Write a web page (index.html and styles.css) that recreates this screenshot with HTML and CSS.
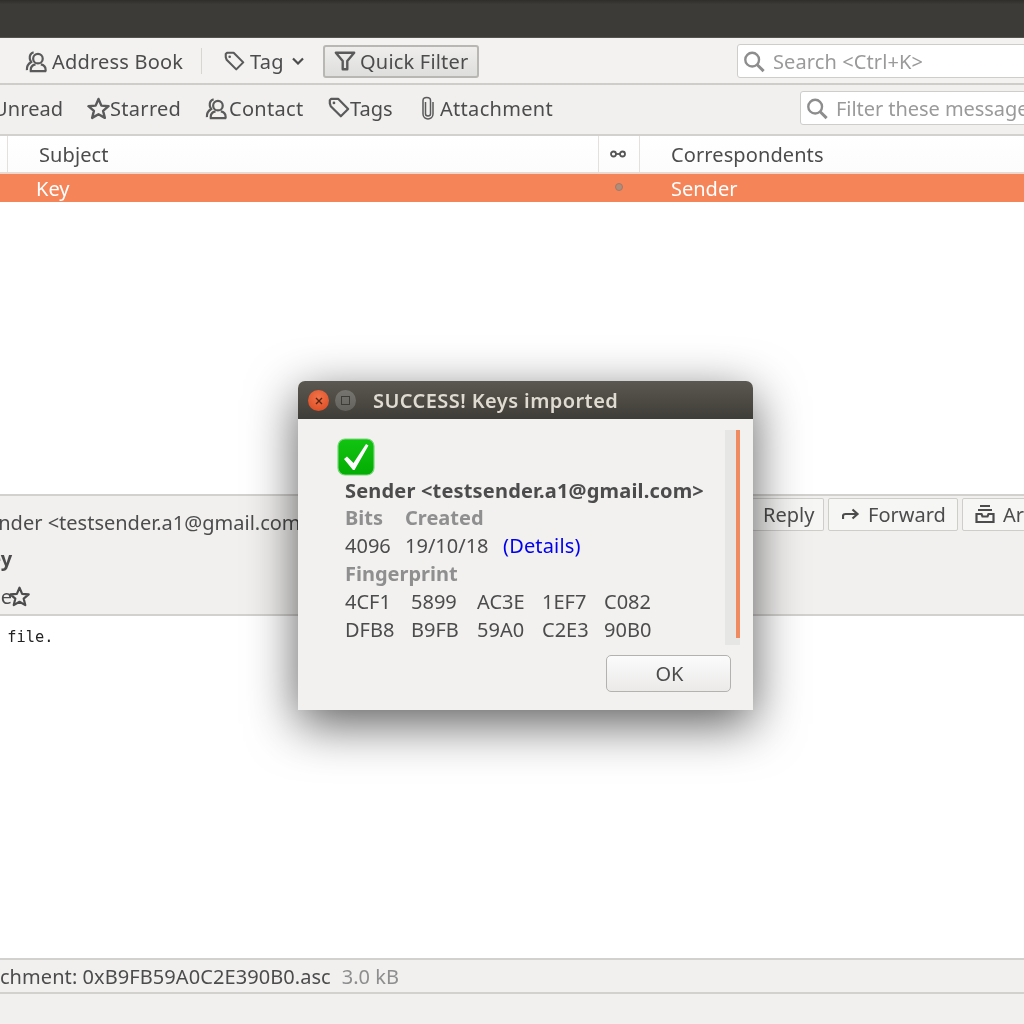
FILE: index.html
```html
<!DOCTYPE html>
<html lang="en">
<head>
<meta charset="utf-8">
<title>Keys imported</title>
<link rel="stylesheet" href="styles.css">
</head>
<body>
<svg class="defs" width="0" height="0" aria-hidden="true">
  <symbol id="i-person" viewBox="0 0 24 24"><g fill="none" stroke="currentColor" stroke-width="2.300"><circle cx="13.500" cy="9" r="5"/><path d="M6 22.500v-2c0-3.500 2.500-5 5-5.500M21.500 22.500v-2c0-3.500-2.500-5-5-5.500M5 22h17"/><path d="M9 2.500C6 3 4.500 6 5 9c.2 1.500 1 2.500 1.500 3.500C4 14 1.500 16.500 2 21"/></g></symbol>
  <symbol id="i-tag" viewBox="0 0 24 24"><path fill="none" stroke="currentColor" stroke-width="2.400" stroke-linejoin="round" d="M2 7V3.500L3.500 2H11l11 11-8 8L3 10z"/><circle cx="6.500" cy="6.500" r="1.500" fill="currentColor"/></symbol>
  <symbol id="i-star" viewBox="0 0 24 24"><path fill="none" stroke="currentColor" stroke-width="2.500" stroke-linejoin="round" d="M12 2l3 7 7.500.6-5.700 4.900 1.800 7.300L12 18l-6.600 3.800 1.800-7.300L1.500 9.600 9 9z"/></symbol>
  <symbol id="i-search" viewBox="0 0 24 24"><g fill="none" stroke="currentColor"><circle cx="10" cy="10" r="7.500" stroke-width="2.600"/><path d="M15.500 15.500l7 7" stroke-width="3.200"/></g></symbol>
</svg>

<div class="app">
  <div class="titlebar"></div>

  <div class="toolbar">
    <span class="sliver">:</span>
    <span class="tool tool-book"><svg class="ico"><use href="#i-person"/></svg>Address Book</span>
    <span class="sep"></span>
    <span class="tool tool-tag"><svg class="ico ico-tag"><use href="#i-tag"/></svg>Tag
      <svg class="chev" viewBox="0 0 12 8"><path d="M1 1.500l5 5 5-5" fill="none" stroke="currentColor" stroke-width="2.200"/></svg></span>
    <span class="qf"><svg class="ico ico-funnel" viewBox="0 0 24 24"><path d="M2 3h20l-7.500 9v9h-5v-9z" fill="none" stroke="currentColor" stroke-width="2.600" stroke-linejoin="round"/></svg>Quick Filter</span>
    <div class="search search-main"><svg class="ico-s"><use href="#i-search"/></svg><span>Search &lt;Ctrl+K&gt;</span></div>
  </div>

  <div class="filterbar">
    <span class="f f-unread">Unread</span>
    <span class="f f-star"><svg class="ico"><use href="#i-star"/></svg>Starred</span>
    <span class="f f-contact"><svg class="ico"><use href="#i-person"/></svg>Contact</span>
    <span class="f f-tags"><svg class="ico ico-small"><use href="#i-tag"/></svg>Tags</span>
    <span class="f f-att"><svg class="ico ico-clip" viewBox="0 0 14 24"><path d="M4.500 6v12c0 2.500 5 2.500 5 0V4.500C9.500 .5 2 .5 2 4.500V18c0 6.500 10 6.500 10 0V6" fill="none" stroke="currentColor" stroke-width="1.500"/></svg>Attachment</span>
    <div class="search search-filter"><svg class="ico-s"><use href="#i-search"/></svg><span>Filter these messages</span></div>
  </div>

  <div class="thead">
    <div class="th th-first"></div>
    <div class="th th-subject">Subject</div>
    <div class="th th-thread"><svg class="glasses" viewBox="0 0 16 8"><g fill="none" stroke="#555" stroke-width="1.800"><circle cx="3.500" cy="4" r="2.500"/><circle cx="12.500" cy="4" r="2.500"/><path d="M6 4h4"/></g></svg></div>
    <div class="th th-corr">Correspondents</div>
  </div>

  <div class="row">
    <div class="td-key">Key</div>
    <div class="td-dot"><span class="dot"></span></div>
    <div class="td-sender">Sender</div>
  </div>

  <div class="list"></div>

  <div class="msghead">
    <div class="mh-line mh-from">
      <span class="mh-from-text">Sender &lt;testsender.a1@gmail.com&gt;</span>
      <div class="actions">
        <span class="act act-reply">Reply</span>
        <span class="act act-forward"><svg class="ico-f" viewBox="0 0 18 12"><path d="M1 11V8c0-1.500 1-2 2.500-2H15M10.500 1.500L15.500 6l-5 4.500" fill="none" stroke="currentColor" stroke-width="2.200"/></svg>Forward</span>
        <span class="act act-archive"><svg class="ico-a" viewBox="0 0 20 20"><g fill="none" stroke="currentColor" stroke-width="2.200"><path d="M5 2h10M3 6h14"/><path d="M1.500 10h5l1 2.500h5l1-2.500h5v8h-17z"/></g></svg>Archive</span>
      </div>
    </div>
    <div class="mh-line mh-subj">Key</div>
    <div class="mh-line mh-me">me<svg class="ico ico-star2"><use href="#i-star"/></svg></div>
  </div>

  <div class="body"><pre class="bodytext">Public key file.</pre></div>

  <div class="attach"><span class="att-name">1 attachment: 0xB9FB59A0C2E390B0.asc</span><span class="att-size">3.0 kB</span></div>
  <div class="foot"></div>

  <div class="dialog">
    <div class="dlg-title">
      <span class="wbtn wbtn-close"><svg viewBox="0 0 10 10"><path d="M2 2l6 6M8 2l-6 6" stroke="#5a2410" stroke-width="1.400"/></svg></span>
      <span class="wbtn wbtn-max"><span class="sq"></span></span>
      <span class="dlg-name">SUCCESS! Keys imported</span>
    </div>
    <div class="dlg-main">
      <div class="dlg-scroll">
        <svg class="check" viewBox="0 0 38 38"><defs><linearGradient id="g-check" x1="0" y1="0" x2="0" y2="1"><stop offset="0" stop-color="#12c412"/><stop offset="1" stop-color="#04ac04"/></linearGradient></defs><rect x="1" y="1" width="36" height="36" rx="7" fill="url(#g-check)" stroke="#7ad87a" stroke-width="1.200"/><path d="M7 21l3-2.500 6.500 6.500L29 6l2.500 1.500L17.500 32H16z" fill="#fff"/></svg>
        <div class="d-name">Sender &lt;testsender.a1@gmail.com&gt;</div>
        <div class="d-info">
          <span class="lbl">Bits</span><span class="lbl">Created</span><span></span>
          <span>4096</span><span>19/10/18</span><a class="details">(Details)</a>
        </div>
        <div class="lbl d-fp">Fingerprint</div>
        <div class="d-grid">
          <span>4CF1</span><span>5899</span><span>AC3E</span><span>1EF7</span><span>C082</span>
          <span>DFB8</span><span>B9FB</span><span>59A0</span><span>C2E3</span><span>90B0</span>
        </div>
        <div class="sb"><div class="sb-thumb"></div></div>
      </div>
      <div class="dlg-foot"><span class="okbtn">OK</span></div>
    </div>
  </div>
</div>
</body>
</html>
```

FILE: styles.css
```css
* { box-sizing: border-box; }
html, body { margin: 0; padding: 0; }
body { width: 1024px; height: 1024px; overflow: hidden; background: #fff; }
.defs { position: absolute; }
.app {
  position: relative;
  width: 1024px;
  height: 1024px;
  overflow: hidden;
  display: flex;
  flex-direction: column;
  font-family: "Noto Sans", "Open Sans", sans-serif;
  font-size: 20px;
  color: #4c4c4c;
  filter: blur(0.45px);
}
.titlebar { height: 38px; flex: none; background: linear-gradient(#2f2e2b, #3c3b37 12%); border-bottom: 1px solid #55534e; }

.toolbar {
  height: 47px; flex: none;
  display: flex; align-items: center;
  background: #f3f2f1;
  border-bottom: 2px solid #cfcdca;
  white-space: nowrap;
  letter-spacing: .2px;
  padding-top: 1px;
}
.toolbar > *, .filterbar > * { flex: none; }
.sliver { color: #5b8fc9; width: 2px; overflow: hidden; margin-left: -3px; }
.ico { width: 23px; height: 23px; flex: none; color: #5a5a5a; }
.tool { display: inline-flex; align-items: center; }
.tool-book { margin-left: 26px; gap: 4px; width: 158px; }
.sep { width: 1px; height: 26px; background: #d8d6d3; margin-left: 18px; }
.tool-tag { margin-left: 22px; gap: 5px; width: 84px; }
.ico-tag { width: 21px; height: 21px; }
.chev { width: 12px; height: 8px; margin-left: 3px; color: #4c4c4c; flex: none; }
.qf {
  margin-left: 15px; width: 156px; height: 33px;
  display: inline-flex; align-items: center; gap: 4px; padding-left: 9px;
  border: 2px solid #b9b7b4; border-radius: 3px;
  background: linear-gradient(#efeeed, #dededc);
}
.ico-funnel { width: 22px; height: 22px; }

.search {
  height: 34px; width: 340px;
  display: flex; align-items: center; gap: 6px;
  background: #fff; border: 1px solid #cfcdca; border-radius: 3px;
  color: #9a9a9a; padding-left: 5px;
}
.ico-s { width: 22px; height: 23px; color: #8d8d8d; flex: none; }
.search-main { margin-left: 258px; gap: 8px; letter-spacing: .1px; }
.search-filter { margin-left: 247px; gap: 8px; letter-spacing: -.05px; }

.filterbar {
  height: 51px; flex: none;
  display: flex; align-items: center;
  background: #f1f0ef;
  border-bottom: 2px solid #d3d1ce;
  white-space: nowrap;
  letter-spacing: .3px;
  padding-bottom: 3px;
}
.f { display: inline-flex; align-items: center; }
.f-unread { margin-left: -7px; width: 65px; letter-spacing: .1px; }
.f-star { margin-left: 29px; gap: 0; width: 94px; }
.f-contact { margin-left: 24px; gap: 1px; width: 99px; }
.f-tags { margin-left: 24px; gap: 0; width: 66px; letter-spacing: 0; }
.ico-small { width: 22px; height: 22px; }
.f-att { margin-left: 27px; gap: 5px; width: 132px; }
.ico-clip { width: 14px; height: 24px; }

.thead {
  height: 38px; flex: none;
  display: grid; grid-template-columns: 8px 591px 41px 1fr;
  background: linear-gradient(#fff, #fcfcfc);
  border-bottom: 2px solid #e9d9d1;
  letter-spacing: .1px;
}
.th { display: flex; align-items: center; border-right: 1px solid #e3e1de; }
.th-subject { padding-left: 31px; }
.th-thread { justify-content: center; }
.th-corr { padding-left: 31px; border-right: 0; }
.glasses { width: 16px; height: 8px; margin-right: 2px; }

.row {
  height: 28px; flex: none;
  display: grid; grid-template-columns: 599px 40px 1fr;
  align-items: center;
  background: #f58459; color: #fff;
}
.td-key { padding-left: 36px; }
.td-dot { display: flex; justify-content: center; padding: 0 1px 3px 0; }
.dot { width: 8px; height: 8px; border-radius: 50%; background: #b08c7b; border: 1px solid #a07a68; }
.td-sender { padding-left: 32px; }

.list { height: 292px; flex: none; background: #fff; }

.msghead {
  height: 122px; flex: none;
  background: #f1f0ef;
  border-top: 2px solid #d3d1ce;
  border-bottom: 2px solid #d3d1ce;
  display: flex; flex-direction: column;
  white-space: nowrap;
}
.mh-line { height: 37px; flex: none; display: flex; align-items: center; }
.mh-from { height: 44px; }
.mh-from-text { margin: 8px 0 0 -24px; width: 776px; flex: none; }
.actions { display: flex; gap: 4px; flex: none; margin-bottom: 8px; }
.act {
  height: 33px; display: inline-flex; align-items: center;
  background: #f6f6f5; border: 1px solid #cfcdca; border-radius: 2px;
}
.act-reply { width: 72px; padding-left: 11px; border-left: 0; }
.act-forward { width: 130px; padding-left: 13px; gap: 8px; }
.act-archive { width: 120px; padding-left: 12px; gap: 8px; }
.ico-f { width: 18px; height: 12px; }
.ico-a { width: 20px; height: 20px; }
.mh-subj { font-weight: 700; margin-left: -24px; }
.mh-me { margin-left: -18px; padding-top: 1px; }
.ico-star2 { color: #4c4c4c; width: 21px; height: 21px; margin-left: -3px; }

.body { flex: 1; background: #fff; min-height: 0; }
.bodytext {
  margin: 12px 0 0 -94px;
  font-family: "DejaVu Sans Mono", monospace;
  font-size: 15.300px; color: #222;
}
.attach {
  height: 36px; flex: none;
  display: flex; align-items: center; white-space: nowrap;
  background: #f1f0ef;
  border-top: 2px solid #d3d1ce;
  border-bottom: 2px solid #d3d1ce;
}
.att-name { margin-left: -54px; letter-spacing: .07px; }
.att-size { color: #8e8e8e; margin-left: 11px; }
.foot { flex: none; height: 30px; background: #f1f0ef; }

.dialog {
  position: absolute; left: 298px; top: 381px;
  width: 455px; height: 329px;
  display: flex; flex-direction: column;
  border-radius: 7px 7px 0 0;
  background: #f2f1f0;
  box-shadow: 0 14px 50px rgba(0,0,0,.64);
  white-space: nowrap;
}
.dlg-title {
  height: 38px; flex: none;
  display: flex; align-items: center;
  background: linear-gradient(#5a5850, #3f3d37);
  border-radius: 7px 7px 0 0;
  padding: 1px 0 0 10px;
}
.wbtn { width: 21px; height: 21px; border-radius: 50%; display: flex; align-items: center; justify-content: center; flex: none; }
.wbtn-close { background: radial-gradient(circle at 50% 35%, #f2734a, #d9481f); }
.wbtn-close svg { width: 10px; height: 10px; }
.wbtn-max { margin-left: 6px; background: linear-gradient(#77756f, #64625c); }
.sq { width: 9px; height: 9px; border: 1.500px solid #3d3c37; }
.dlg-name { margin-left: 17px; color: #dfdbd2; font-weight: 600; letter-spacing: .42px; }

.dlg-main { flex: 1; display: flex; flex-direction: column; min-height: 0; }
.dlg-scroll {
  position: relative; height: 226px; flex: none;
  margin-top: 11px;
  padding-left: 47px;
  color: #4c4c4c;
}
.check { display: block; width: 38px; height: 38px; margin: 8px 0 0 -8px; }
.d-name { font-weight: 700; height: 28px; line-height: 30px; letter-spacing: .18px; }
.lbl { font-weight: 700; color: #8f8f8f; }
.d-info { display: grid; grid-template-columns: 60px 98px auto; justify-content: start; grid-auto-rows: 28px; line-height: 28px; }
.details { color: #0000ee; letter-spacing: .15px; }
.d-fp { height: 28px; line-height: 28px; }
.d-grid { display: grid; grid-template-columns: 66px 66px 65px 62px 60px; justify-content: start; grid-auto-rows: 28px; line-height: 28px; }
.sb { position: absolute; left: 427px; top: 0; width: 15px; height: 215px; background: #e6e6e5; }
.sb-thumb { position: absolute; right: 0; top: 0; width: 4px; height: 208px; background: #f08a60; }
.dlg-foot { display: flex; justify-content: flex-end; padding-right: 22px; margin-top: -1px; }
.okbtn {
  width: 125px; height: 37px;
  display: flex; align-items: center; justify-content: center;
  padding-left: 2px;
  background: linear-gradient(#fbfbfb, #ebeae9);
  border: 1.500px solid #b4b2ae; border-radius: 5px;
}
```
